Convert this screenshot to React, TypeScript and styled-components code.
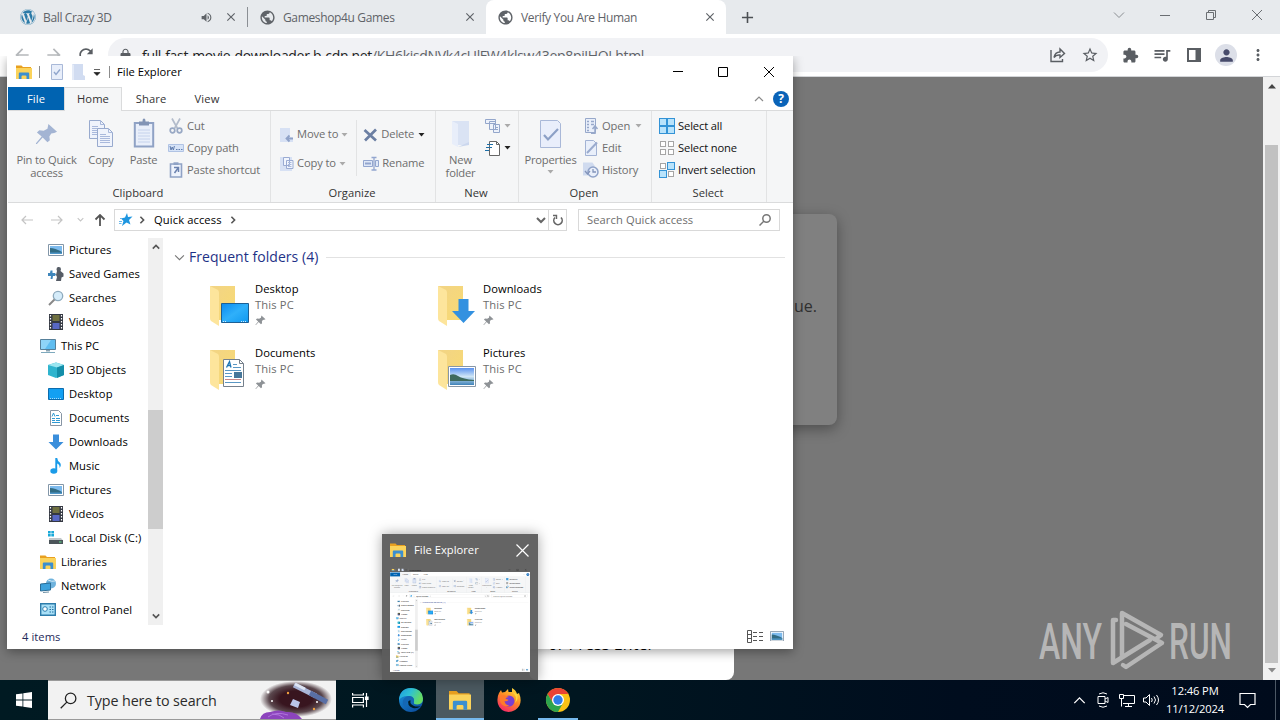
import React from 'react';
import styled, { createGlobalStyle, css } from 'styled-components';
import {
  MdAdd,
  MdArrowBack,
  MdArrowForward,
  MdClose,
  MdExtension,
  MdLock,
  MdMoreVert,
  MdPerson,
  MdPublic,
  MdQueueMusic,
  MdRefresh,
  MdStarBorder,
  MdVolumeUp,
} from 'react-icons/md';
import { FaWordpress } from 'react-icons/fa';

const GlobalStyle = createGlobalStyle`
  * {
    box-sizing: border-box;
  }
  body {
    margin: 0;
    font-family: 'Open Sans', 'Noto Sans', sans-serif;
    font-size: 11.2px;
    color: #000;
    overflow: hidden;
  }
  svg {
    display: block;
    flex: none;
  }
`;

const Screen = styled.div`
  position: relative;
  width: 1280px;
  height: 720px;
  display: flex;
  flex-direction: column;
  overflow: hidden;
  background: #777;
`;

/* ---------- browser ---------- */

const Browser = styled.div`
  height: 680px;
  display: flex;
  flex-direction: column;
`;

const TabStrip = styled.div`
  height: 34px;
  flex: none;
  display: flex;
  background: #e7eaed;
`;

const BrowserTab = styled.div<{ $active?: boolean; $width: number; $left?: number }>`
  width: ${(p) => p.$width}px;
  height: 34px;
  padding: 0 9px 0 ${(p) => p.$left ?? 11}px;
  display: flex;
  align-items: center;
  font-size: 12px;
  letter-spacing: -0.35px;
  color: #5f6368;
  background: ${(p) => (p.$active ? '#fff' : 'transparent')};
  border-radius: 8px 8px 0 0;
  span {
    flex: 1;
    margin-left: 7px;
    white-space: nowrap;
  }
  svg + svg {
    margin-left: 11px;
  }
`;

const TabDivider = styled.i`
  width: 1px;
  height: 20px;
  margin-top: 7px;
  background: #8b8f94;
`;

const NewTab = styled.div`
  display: flex;
  align-items: center;
  margin-left: 12px;
  color: #4c5054;
`;

const Caption = styled.div`
  margin-left: auto;
  height: 29px;
  display: flex;
  align-items: center;
  svg {
    width: 46px;
  }
`;

const Toolbar = styled.div`
  height: 43px;
  flex: none;
  display: flex;
  align-items: center;
  background: #fff;
  border-bottom: 1px solid #d3d5d8;
  color: #5a5e63;
`;

const NavButtons = styled.div`
  width: 108px;
  padding-left: 12px;
  display: flex;
  gap: 12px;
`;

const Omnibox = styled.div`
  width: 1000px;
  height: 34px;
  padding: 0 9px 0 10px;
  display: flex;
  align-items: center;
  border-radius: 17px;
  background: #f1f2f5;
  span {
    flex: 1;
    margin-left: 9px;
    font-size: 14px;
    letter-spacing: -0.33px;
    white-space: nowrap;
    color: #222;
  }
  em {
    font-style: normal;
    color: #5f6368;
  }
  svg + svg {
    margin-left: 14px;
  }
`;

const ToolbarIcons = styled.div`
  flex: 1;
  display: flex;
  align-items: center;
  padding-left: 11px;
`;

const IconCell = styled.div`
  width: 32px;
  margin-left: -5px;
  margin-right: 5px;
  display: flex;
  justify-content: center;
`;

const Profile = styled.div`
  width: 22px;
  height: 22px;
  border-radius: 50%;
  display: flex;
  align-items: center;
  justify-content: center;
  background: #dcdfe8;
  color: #474b6b;
`;

const Viewport = styled.div`
  flex: 1;
  display: flex;
  min-height: 0;
`;

const WebPage = styled.div`
  position: relative;
  flex: 1;
  padding: 137px 0 0 426px;
  background: #777;
`;

const ConsentCard = styled.div`
  width: 411px;
  height: 211px;
  padding: 81px 20px 0;
  text-align: right;
  font-size: 16px;
  color: #303030;
  background: #808080;
  border-radius: 8px;
  box-shadow: 0 4px 14px rgba(0, 0, 0, 0.35);
`;

const VerifyPanel = styled.div`
  position: absolute;
  left: 529px;
  bottom: 0;
  width: 205px;
  height: 60px;
  padding: 12px 0 0 19px;
  border-radius: 0 0 8px 8px;
  background: #fff;
  font-size: 16px;
  letter-spacing: 0.1px;
  line-height: 24px;
`;

const PageScrollbar = styled.div`
  width: 17px;
  padding: 7px 2px 7px;
  display: flex;
  flex-direction: column;
  align-items: center;
  background: #f1f1f1;
  i {
    width: 13px;
    height: 518px;
    margin: 56px 0 auto;
    background: #c1c1c1;
  }
`;

const Watermark = styled.svg`
  position: absolute;
  left: 1036px;
  top: 530px;
  overflow: visible;
  font-family: Roboto, sans-serif;
`;

/* ---------- explorer ---------- */

const WindowFrame = styled.div<{ $ghost?: boolean }>`
  width: 786px;
  height: 593px;
  padding-left: 1px;
  display: flex;
  flex-direction: column;
  background: ${(p) =>
    p.$ghost ? 'linear-gradient(transparent 27px, #fff 27px)' : '#fff'};
  white-space: nowrap;
`;

const ExplorerPosition = styled.div`
  position: absolute;
  left: 7px;
  top: 56px;
  box-shadow: 0 3px 10px rgba(0, 0, 0, 0.35);
  clip-path: inset(0 -14px -14px -14px);
`;

const TitleBar = styled.div`
  height: 31px;
  flex: none;
  display: flex;
  align-items: center;
  padding: 0 1px 0 8px;
`;

const TitleDivider = styled.i<{ $left: number; $right: number }>`
  width: 1px;
  height: 12px;
  margin: 0 ${(p) => p.$right}px 0 ${(p) => p.$left}px;
  background: #8c8c8c;
`;

const QuickTools = styled.div`
  display: flex;
  align-items: center;
  gap: 8px;
`;

const Title = styled.span`
  letter-spacing: 0.02px;
  margin-bottom: 1px;
`;

const WindowButtons = styled.div`
  margin-left: auto;
  display: flex;
  svg {
    width: 46px;
  }
`;

const RibbonTabs = styled.div`
  height: 24px;
  flex: none;
  display: flex;
  border-bottom: 1px solid #dadbdc;
`;

const RibbonTab = styled.div<{ $kind?: 'file' | 'active' }>`
  width: 56px;
  height: 24px;
  line-height: 24px;
  text-align: center;
  letter-spacing: 0.1px;
  color: #333;
  ${(p) =>
    p.$kind === 'file' &&
    css`
      height: 23px;
      background: #0063b1;
      color: #fff;
    `}
  ${(p) =>
    p.$kind === 'active' &&
    css`
      width: 58px;
      margin-right: 1px;
      background: #f5f6f7;
      border: 1px solid #dadbdc;
      border-bottom: 0;
      line-height: 22px;
    `}
`;

const RibbonHelp = styled.div`
  margin-left: auto;
  padding-right: 4px;
  display: flex;
  align-items: center;
  gap: 9px;
`;

const HelpBadge = styled.div`
  width: 16px;
  height: 16px;
  border-radius: 50%;
  background: #0a63b8;
  color: #fff;
  font-weight: 700;
  font-size: 12px;
  line-height: 16px;
  text-align: center;
`;

const Ribbon = styled.div`
  height: 92px;
  flex: none;
  display: flex;
  background: #f5f6f7;
  border-bottom: 1px solid #dadbdc;
`;

const Group = styled.div<{ $width: number }>`
  width: ${(p) => p.$width}px;
  display: flex;
  flex-direction: column;
  border-right: 1px solid #e2e3e4;
`;

const GroupBody = styled.div<{ $left: number }>`
  height: 73px;
  padding-left: ${(p) => p.$left}px;
  display: flex;
`;

const GroupLabel = styled.div`
  height: 18px;
  padding-right: 2px;
  line-height: 17px;
  text-align: center;
  letter-spacing: 0.02px;
  color: #333;
`;

const BigButton = styled.div<{ $width: number }>`
  width: ${(p) => p.$width}px;
  padding-top: 7px;
  display: flex;
  flex-direction: column;
  align-items: center;
  flex: none;
  color: #6d6d6d;
  line-height: 13px;
  letter-spacing: -0.2px;
  text-align: center;
  svg:first-child {
    margin-bottom: 3px;
  }
  svg + span + svg {
    margin-top: 4px;
  }
`;

const Commands = styled.div<{ $left?: number; $top?: number }>`
  padding: ${(p) => p.$top ?? 4}px 0 0 ${(p) => p.$left ?? 0}px;
`;

const Command = styled.div<{ $row?: number; $enabled?: boolean }>`
  height: ${(p) => p.$row ?? 22}px;
  padding-bottom: 2px;
  display: flex;
  align-items: center;
  gap: 3px;
  letter-spacing: -0.14px;
  color: ${(p) => (p.$enabled ? '#111' : '#6d6d6d')};
  svg {
    margin-top: 2px;
  }
`;

const CommandDivider = styled.i`
  width: 1px;
  height: 56px;
  margin: 9px 6px 0 8px;
  background: #e2e3e4;
`;

const AddressRow = styled.div`
  height: 35px;
  flex: none;
  display: flex;
  align-items: center;
  padding: 0 0 2px 12px;
`;

const NavArrows = styled.div`
  width: 88px;
  display: flex;
  align-items: center;
  padding-left: 1px;
  svg:nth-child(2) {
    margin-left: 18px;
  }
  svg:nth-child(3) {
    margin: 0 10px 0 14px;
  }
`;

const AddressBar = styled.div`
  width: 453px;
  height: 22px;
  margin-left: 6px;
  display: flex;
  align-items: center;
  border: 1px solid #d9d9d9;
  padding-left: 4px;
  svg + svg {
    margin-left: 5px;
  }
  span {
    margin: 0 7px 1px 8px;
    letter-spacing: 0.1px;
  }
`;

const AddressEnd = styled.div`
  margin-left: auto;
  height: 20px;
  display: flex;
  align-items: center;
  svg:first-child {
    margin-right: 2px;
  }
`;

const RefreshCell = styled.div`
  width: 18px;
  height: 20px;
  padding-left: 2px;
  display: flex;
  align-items: center;
  justify-content: center;
  border-left: 1px solid #d9d9d9;
`;

const SearchField = styled.div`
  width: 202px;
  height: 22px;
  margin-left: 11px;
  padding: 0 8px 1px 8px;
  display: flex;
  align-items: center;
  justify-content: space-between;
  border: 1px solid #d9d9d9;
  color: #6d6d6d;
  letter-spacing: 0.08px;
  svg {
    margin-top: 1px;
  }
`;

const Body = styled.div`
  flex: 1;
  display: flex;
  min-height: 0;
`;

const Tree = styled.div`
  width: 140px;
`;

const TreeItem = styled.div<{ $root?: boolean }>`
  height: 24px;
  padding: 0 0 2px ${(p) => (p.$root ? 32 : 40)}px;
  display: flex;
  align-items: center;
  gap: 5px;
  letter-spacing: 0.05px;
`;

const TreeIcon = styled.div`
  width: 16px;
  padding-top: 2px;
  display: flex;
  justify-content: center;
`;

const TreeScrollbar = styled.div`
  width: 15px;
  padding: 5px 0 5px;
  display: flex;
  flex-direction: column;
  align-items: center;
  background: #f0f0f0;
  i {
    width: 15px;
    height: 119px;
    margin: 159px 0 auto;
    background: #cdcdcd;
  }
`;

const Files = styled.div`
  flex: 1;
  padding: 9px 8px 0 11px;
`;

const SectionHeader = styled.div`
  height: 20px;
  display: flex;
  align-items: center;
  gap: 4px;
  font-size: 14px;
  letter-spacing: 0.05px;
  color: #1e3287;
  span {
    margin-bottom: 2px;
  }
  i {
    flex: 1;
    height: 1px;
    margin-left: 4px;
    background: #e2e2e2;
  }
`;

const Tiles = styled.div`
  padding: 13px 0 0 36px;
  display: grid;
  grid-template-columns: 228px 228px;
  grid-auto-rows: 64px;
`;

const Tile = styled.div`
  display: flex;
  gap: 5px;
  line-height: 16px;
  > svg {
    margin-top: 4px;
  }
  > div {
    padding-top: 1px;
  }
  div > svg {
    margin-top: 2px;
  }
  p {
    margin: 0;
    letter-spacing: 0.05px;
  }
  p + p {
    color: #6d6d6d;
    letter-spacing: 0.15px;
  }
`;

const StatusBar = styled.div`
  height: 24px;
  flex: none;
  padding: 0 9px 0 14px;
  display: flex;
  align-items: center;
  color: #1e2a5a;
  span {
    flex: 1;
    margin-bottom: 2px;
    letter-spacing: 0.05px;
  }
  svg {
    margin-bottom: 2px;
  }
  svg + svg {
    margin-left: 6px;
  }
`;

/* ---------- task bar ---------- */

const Preview = styled.div`
  position: absolute;
  left: 382px;
  top: 534px;
  width: 156px;
  height: 146px;
  background: rgba(92, 92, 92, 0.95);
  box-shadow: 0 0 12px rgba(0, 0, 0, 0.35);
`;

const PreviewHeader = styled.div`
  height: 33px;
  padding: 0 9px 0 8px;
  display: flex;
  align-items: center;
  color: #fff;
  svg:first-child {
    margin-bottom: 1px;
  }
  span {
    flex: 1;
    margin: 0 0 2px 8px;
    letter-spacing: 0.02px;
  }
`;

const Thumbnail = styled.div`
  width: 140px;
  height: 105px;
  margin-left: 8px;
  overflow: hidden;
  > div {
    transform: scale(0.1781, 0.177);
    transform-origin: 0 0;
  }
`;

const TaskBar = styled.div`
  height: 40px;
  display: flex;
  background: linear-gradient(90deg, #001a22, #001620 45%, #000d1e 75%, #000b1c);
  color: #fff;
`;

const TaskButton = styled.div<{ $width?: number }>`
  width: ${(p) => p.$width ?? 48}px;
  display: flex;
  align-items: center;
  justify-content: center;
`;

const TaskSearch = styled.div`
  width: 288px;
  padding-left: 12px;
  display: flex;
  align-items: center;
  background: #f2f2f2;
  border: 1px solid #9a9a9a;
  border-width: 1px 0;
  color: #2b2b2b;
  font-size: 14.3px;
  letter-spacing: -0.1px;
  span {
    flex: 1;
    margin-left: 10px;
  }
`;

const AppButton = styled.div<{ $state?: 'active' | 'open' }>`
  width: 48px;
  height: 40px;
  margin-right: 1px;
  display: flex;
  align-items: center;
  justify-content: center;
  ${(p) =>
    p.$state === 'active' &&
    css`
      background: #4b5960;
      box-shadow: inset 0 -2px #76b9ed;
    `}
  ${(p) =>
    p.$state === 'open' &&
    css`
      background: linear-gradient(#76b9ed, #76b9ed) 4px 38px / 40px 2px no-repeat;
    `}
`;

const Tray = styled.div`
  margin-left: auto;
  display: flex;
  align-items: center;
`;

const TrayIcon = styled.div`
  width: 24px;
  display: flex;
  justify-content: center;
`;

const Clock = styled.div`
  width: 64px;
  font-size: 11.2px;
  line-height: 18px;
  letter-spacing: -0.12px;
  text-align: center;
  white-space: nowrap;
`;

const ShowDesktop = styled.i`
  width: 5px;
  height: 40px;
  margin-left: 8px;
  border-left: 1px solid #4c5865;
`;

/* ---------- icons ---------- */

type ChevronProps = { dir: 'up' | 'down' | 'right'; size?: number; color?: string; weight?: number };

const chevrons = { up: 'M1 7l4-4 4 4', down: 'M1 3l4 4 4-4', right: 'M3 1l4 4-4 4' };

const Chevron = ({ dir, size = 10, color = '#555', weight = 1.5 }: ChevronProps) => (
  <svg width={size} height={size} viewBox="0 0 10 10" fill="none" stroke={color} strokeWidth={weight}>
    <path d={chevrons[dir]} />
  </svg>
);

const Caret = ({ color = '#aaa', gap = 0 }: { color?: string; gap?: number }) => (
  <svg width={7 + gap} height="4" viewBox={`${-gap} 0 ${7 + gap} 4`}>
    <path d="M0.5 0h6L3.5 3.5z" fill={color} />
  </svg>
);

const FolderIcon = ({ size = 16 }: { size?: number }) => (
  <svg width={size} height={size} viewBox="0 0 16 16">
    <path d="M0 1.5h5.5l1.5 1.5H15v3H0z" fill="#e8a020" />
    <path d="M0 4h16v11H0z" fill="#fbd35b" />
    <path d="M2.8 15V9.5q0-1 1-1h8.4q1 0 1 1V15h-2.7v-2.4q0-1-1-1h-3q-1 0-1 1V15z" fill="#3c8fd0" />
  </svg>
);

const DocCheckIcon = () => (
  <svg width="12" height="16" viewBox="0 0 12 16" fill="#e8eefa" stroke="#a9b9d8">
    <path d="M.5.5h11v15H.5z" />
    <path d="M3 8l2 2.5L9 5.5" fill="none" stroke="#8fa5cc" strokeWidth="1.4" />
  </svg>
);

const PlainFolder = () => (
  <svg width="14" height="16" viewBox="0 0 14 16">
    <path d="M1 0h11v11l2 1v4H1z" fill="#d1dcf1" />
    <path d="M1 0l2 1v15H1z" fill="#e4ebf8" />
  </svg>
);

const PinIcon = ({ size = 24, color = '#a3b4d3' }: { size?: number; color?: string }) => (
  <svg width={size} height={size} viewBox="0 0 24 24" fill={color}>
    <path d="M14 1l9 8-3 1.500-3 .5-2 3 .5 4-2.500 2-5-5-6 7H1v-1l6-7-5-4 2.500-2.500 4.500.5L13 6z" />
  </svg>
);

const Sheet = ({ x = 0, y = 0 }: { x?: number; y?: number }) => (
  <g transform={`translate(${x} ${y})`}>
    <path d="M.5.5h11l4 4v14H.5z" fill="#eff3fc" stroke="#98aace" />
    <path d="M11.5.5v4h4M3 6.500h6M3 8.500h10M3 10.500h10M3 12.500h10M3 14.500h10" fill="none" stroke="#a9b9dc" />
  </g>
);

const CopyIcon = () => (
  <svg width="26" height="32" viewBox="0 0 26 32">
    <Sheet x={1} y={2} />
    <Sheet x={9} y={10} />
  </svg>
);

const PasteIcon = () => (
  <svg width="22" height="32" viewBox="0 0 22 32">
    <path d="M1.800 5h18.400v23.500H1.800z" fill="#e9effa" stroke="#8fa2c5" strokeWidth="2" />
    <path d="M6 3.500h3.500q0-3 1.500-3t1.500 3H16v4H6z" fill="#8294b5" />
    <path d="M5 12h12M5 15h12M5 18h12M5 21h12M5 24h12" stroke="#c5d2ec" />
  </svg>
);

const CutIcon = () => (
  <svg width="16" height="16" viewBox="0 0 16 16" fill="none" stroke="#98a8c4" strokeWidth="1.700">
    <path d="M4 .5l5.500 10M12 .5l-5.500 10" stroke="#b3bccb" />
    <circle cx="4.500" cy="12.500" r="2.300" />
    <circle cx="11.500" cy="12.500" r="2.300" />
  </svg>
);

const CopyPathIcon = () => (
  <svg width="16" height="16" viewBox="0 0 16 16">
    <path d="M.5 4.500h15v7H.5z" fill="#d6e3f7" stroke="#b0c3e4" />
    <path d="M2 6l1 4 1.200-3 1.200 3 1-4M8 9.500h1.500M10.500 9.500H12M13 9.500h1.500" fill="none" stroke="#5f7cad" />
  </svg>
);

const PasteShortcutIcon = () => (
  <svg width="16" height="16" viewBox="0 0 16 16">
    <path d="M2.500 2h11v13h-11z" fill="#eef3fc" stroke="#8fa2c5" strokeWidth="1.600" />
    <path d="M5.500.3h5v2.700h-5z" fill="#8fa2c5" />
    <path d="M6 5.500h4.500V10M10.500 5.500L6.500 11" fill="none" stroke="#6b82af" strokeWidth="1.500" />
  </svg>
);

const MoveToIcon = () => (
  <svg width="14" height="16" viewBox="0 0 14 16">
    <path d="M0 1h10v9l3 1v4H0z" fill="#d7e1f4" />
    <path d="M13 11.500H7M9.500 8.500l-3 3 3 3" stroke="#8fa2c8" strokeWidth="1.800" fill="none" />
  </svg>
);

const CopyToIcon = () => (
  <svg width="14" height="16" viewBox="0 0 14 16">
    <path d="M0 1h12v14H0z" fill="#d7e1f4" />
    <path d="M3.500 1.500h6v8h-6zM6.500 4.500h6.500v8H6.500z" fill="#f1f5fd" stroke="#9aabd2" />
    <path d="M8 6.500h3.500M8 8.500h3.500M8 10.500h3.500" stroke="#a9b9dc" />
  </svg>
);

const DeleteIcon = () => (
  <svg width="15" height="14" viewBox="0 0 15 14">
    <path d="M1.500 2l11.500 10.500M13 1.500L2 12.500" stroke="#6b7fa3" strokeWidth="2.700" />
  </svg>
);

const RenameIcon = () => (
  <svg width="16" height="16" viewBox="0 0 16 16" fill="none" stroke="#93a6cf">
    <path d="M.5 4.500h9v6h-9zM12.500 4.500h3v6h-3z" fill="#dfe8f8" />
    <path d="M2 7.500h6" strokeWidth="2" />
    <path d="M8.500 1.500h2.500v12.500H8.500M13.500 1.500H11M13.500 14H11" strokeWidth="1.300" />
  </svg>
);

const NewFolderIcon = () => (
  <svg width="22" height="32" viewBox="0 0 22 32">
    <path d="M2 3h17v24H6z" fill="#dae3f4" />
    <path d="M2 3l6 3v23l-6-3z" fill="#e8eefa" />
    <path d="M8 29l11-5v3z" fill="#cbd7ee" />
  </svg>
);

const NewItemIcon = () => (
  <svg width="16" height="16" viewBox="0 0 16 16" fill="#edf2fb" stroke="#93a6cb">
    <path d="M.5 1.500h10v4H.5zM4.500 3.500h6v8h-6zM8.500 6.500h6v8h-6z" />
    <path d="M10 9.500h3M10 11.500h3" />
  </svg>
);

const EasyAccessIcon = () => (
  <svg width="16" height="16" viewBox="0 0 16 16" fill="none">
    <path d="M4.500 1.500h7l3 3v11H4.500z" fill="#fff" stroke="#666" />
    <path d="M11.500 1.500v3h3" stroke="#666" />
    <path d="M2 4.500h6M1 7.500h6M0 10.500h4" stroke="#1d6fa8" strokeWidth="1.200" />
  </svg>
);

const PropertiesIcon = () => (
  <svg width="22" height="32" viewBox="0 0 22 32">
    <path d="M.5 2.500h17l3 3v24H.5z" fill="#e9eefb" stroke="#a9b8d8" />
    <path d="M4 17l4 4.500L18 11" fill="none" stroke="#8ca0c6" strokeWidth="2.200" />
  </svg>
);

const OpenIcon = () => (
  <svg width="16" height="16" viewBox="0 0 16 16" fill="none" stroke="#97a8ca">
    <path d="M2.500.5h10v14h-10z" fill="#e9effa" />
    <path d="M4 3.500h2M8 3.500h3M4 6.500h2M8 6.500h3M4 9.500h2M4 12.500h2" strokeWidth="1.500" />
    <path d="M8 15.500h4V9M9.500 11L12 8l2.500 3" strokeWidth="1.500" />
  </svg>
);

const EditIcon = () => (
  <svg width="16" height="16" viewBox="0 0 16 16">
    <path d="M2.500.5h8l3 3v12h-11z" fill="#e9effa" stroke="#a3b3d4" />
    <path d="M4 13L14 2.500" stroke="#9aabce" strokeWidth="2" />
  </svg>
);

const HistoryIcon = () => (
  <svg width="16" height="16" viewBox="0 0 16 16">
    <path d="M0 .5h9.500l2 3v10H0z" fill="#d0dbef" />
    <circle cx="10" cy="10" r="5" fill="#e9effa" stroke="#8fa2c8" strokeWidth="1.500" />
    <path d="M10 7v3h3M2 9l2.500 3L7 9" fill="none" stroke="#8294ba" strokeWidth="1.300" />
  </svg>
);

const selectPatterns = { all: [1, 1, 1, 1], none: [0, 0, 0, 0], invert: [0, 1, 1, 0] };

const SelectIcon = ({ kind }: { kind: keyof typeof selectPatterns }) => (
  <svg width="16" height="16" viewBox="0 0 16 16">
    {selectPatterns[kind].map((on, i) => {
      const x = (i % 2) * 8;
      const y = i > 1 ? 8 : 0;
      return on ? (
        <rect key={i} x={x + 0.5} y={y + 0.5} width="7" height="7" fill="#b9e3fb" stroke="#3393d6" />
      ) : (
        <rect key={i} x={x + 1.5} y={y + 1.5} width="5" height="5" fill="#fff" stroke="#a5a5a5" />
      );
    })}
  </svg>
);

const Arrow = ({ back, dark }: { back?: boolean; dark?: boolean }) => (
  <svg width="12" height="12" viewBox="0 0 12 12" fill="none" stroke={dark ? '#555' : '#c4c4c4'} strokeWidth={dark ? 1.8 : 1.2}>
    {dark ? <path d="M6 12V1M1.500 5.500L6 1l4.500 4.500" /> : <path d={back ? 'M12 6H1M5 2L1 6l4 4' : 'M0 6h11M7 2l4 4-4 4'} />}
  </svg>
);

const StarIcon = () => (
  <svg width="14" height="14" viewBox="0 0 14 14">
    <path d="M8 0l1 4 4.500-.5-3.500 3.500 1.500 4.500L7.500 9.500 3 13l1.500-5L2 5.500 6 4.500z" fill="#1e96e0" />
    <path d="M0 8.500h3M0 10.500h2.500M1 5.500h2" stroke="#6bb9ec" />
  </svg>
);

const SearchIcon = ({ size = 12, color = '#777', width = 1.5 }: { size?: number; color?: string; width?: number }) => (
  <svg width={size} height={size} viewBox="0 0 12 12" fill="none" stroke={color} strokeWidth={width}>
    <circle cx="7.500" cy="4.500" r="3.700" />
    <path d="M5 7L.5 11.500" />
  </svg>
);

const RefreshIcon = () => (
  <svg width="12" height="12" viewBox="0 0 12 12" fill="none" stroke="#666" strokeWidth="1.600">
    <path d="M9 3.500A4.200 4.200 0 1 1 3 3.500" />
    <path d="M1 1.500h3.500V5" strokeWidth="1.400" />
  </svg>
);

const PictureIcon = ({ width = 16 }: { width?: number }) => (
  <svg width={width} height={width * 0.75} viewBox="0 0 16 12">
    <path d="M.5.5h15v11H.5z" fill="#fff" stroke="#8396a8" />
    <path d="M2 2h12v8H2z" fill="#7dbbee" />
    <path d="M2 4q5 0 12 4v2H2z" fill="#316b83" />
    <path d="M2 8.500h12V10H2z" fill="#4e96c8" />
  </svg>
);

const GamesIcon = () => (
  <svg width="16" height="16" viewBox="0 0 16 16">
    <path d="M10 1q3-.5 3 2.300L12.500 5l3 2.500v3l-2 1L13 15H8l1-4-1-2 1-4-.5-1.500Q8.500 1 10 1z" fill="#555c66" />
    <path d="M0 7h2l.5-2.500h2V7h2.500l1 1.500-1 1.500H5l-.5 3h-2l.5-3H0z" fill="#3f86bb" />
  </svg>
);

const LensIcon = () => (
  <svg width="16" height="16" viewBox="0 0 16 16">
    <circle cx="10" cy="6" r="4.700" fill="#d5ecfa" stroke="#8eaabd" strokeWidth="1.300" />
    <path d="M6.500 9.500L1 15" stroke="#888" strokeWidth="2" />
  </svg>
);

const FilmIcon = () => (
  <svg width="14" height="16" viewBox="0 0 14 16">
    <path d="M0 0h14v16H0z" fill="#343842" />
    <path d="M1.500 1v14M12.500 1v14" stroke="#fff" strokeWidth="1.200" strokeDasharray="1.500 1.500" />
    <path d="M3.500 1h7v6h-7z" fill="#6f7040" />
    <path d="M3.500 9h7v6h-7z" fill="#5868c4" />
  </svg>
);

const PcIcon = () => (
  <svg width="16" height="16" viewBox="0 0 16 16">
    <path d="M.5 1.500h15v10H.5z" fill="#5fbdf0" stroke="#56809a" />
    <path d="M1 2h10L5 11H1z" fill="#8ed4f8" />
    <path d="M6 12h4v1.500H6z" fill="#8ba5b3" />
    <path d="M1 14.500h14" stroke="#7ea9bd" />
  </svg>
);

const CubeIcon = () => (
  <svg width="16" height="16" viewBox="0 0 16 16">
    <path d="M0 3l8-2.500L16 3v10l-8 3-8-3z" fill="#2fb4ce" />
    <path d="M0 3l8-2.500L16 3 9 5.500z" fill="#9be6f0" />
    <path d="M9 5.500L16 3v10l-7 3z" fill="#148ea9" />
  </svg>
);

const DesktopIcon = () => (
  <svg width="16" height="12" viewBox="0 0 16 12">
    <path d="M.5.5h15v11H.5z" fill="#13a0f2" stroke="#0c6cad" />
    <path d="M2 10.500h12" stroke="#a9dcfb" strokeDasharray="1 1" />
  </svg>
);

const DocumentIcon = () => (
  <svg width="12" height="16" viewBox="0 0 12 16">
    <path d="M.5.5h8l3 3v12H.5z" fill="#fff" stroke="#8795a4" />
    <path d="M2 6.500l1.500-3.500L5 6.500M6 5.500h3M2 8.500h3M6 8.500h4M2 10.500h3M6 10.500h4M2 12.500h8" fill="none" stroke="#2f9ad4" />
  </svg>
);

const DownIcon = () => (
  <svg width="16" height="16" viewBox="0 0 16 16">
    <path d="M5 .5h6V8h4.500L8 15.500.5 8H5z" fill="#3a8edb" />
  </svg>
);

const MusicIcon = () => (
  <svg width="16" height="16" viewBox="0 0 16 16" fill="#1a9be8">
    <path d="M7.300 0h1.900q.3 3 2.600 4.500Q14 7 11.500 10q.6-3.500-2.300-4.500v7H7.300z" />
    <ellipse cx="5.800" cy="13" rx="3.500" ry="2.700" />
  </svg>
);

const DiskIcon = () => (
  <svg width="16" height="16" viewBox="0 0 16 16">
    <path d="M0 1h2.700v2.500H0zM3.300 1H6v2.500H3.300zM0 4h2.700v2.500H0zM3.300 4H6v2.500H3.300z" fill="#19a9d8" />
    <path d="M1 8h12l2 2.500H1z" fill="#c3c8cb" />
    <path d="M1 10h14v4H1z" fill="#4c555a" />
    <path d="M11 12h2.500" stroke="#5fe08a" />
  </svg>
);

const NetworkIcon = () => (
  <svg width="16" height="16" viewBox="0 0 16 16">
    <circle cx="11" cy="5.500" r="5" fill="#6fb3dd" />
    <path d="M8 2q4 2 7 1" stroke="#d4ecf8" fill="none" />
    <path d="M.5 6l10-1v7l-10 1z" fill="#3ea2dc" stroke="#2b6d96" />
    <path d="M3 14.500l6-.5" stroke="#6e8fa4" />
  </svg>
);

const ControlIcon = () => (
  <svg width="16" height="14" viewBox="0 0 16 14">
    <path d="M.7.7h14.600v11.600H.7z" fill="#a9e0f7" stroke="#2d7cab" strokeWidth="1.400" />
    <circle cx="5" cy="6" r="2.300" fill="#fff" stroke="#2b7fb0" />
    <path d="M9.500 4h4M9.500 6.500h4M9.500 9h4" stroke="#256f9e" strokeDasharray="1.500 1" />
  </svg>
);

const BigFolder = ({ kind }: { kind: string }) => (
  <svg width="40" height="44" viewBox="0 0 40 44">
    <defs>
      <linearGradient id="folderBack" x1="0" y1="0" x2="1" y2="1">
        <stop offset="0" stopColor="#f2d486" />
        <stop offset="1" stopColor="#f8da72" />
      </linearGradient>
      <linearGradient id="screenBlue" x1="0" y1="0" x2="1" y2="1">
        <stop offset="0" stopColor="#0a8af0" />
        <stop offset="0.500" stopColor="#2fb0fa" />
        <stop offset="1" stopColor="#0f98f0" />
      </linearGradient>
      <linearGradient id="photo" x1="0" y1="0" x2="0" y2="1">
        <stop offset="0" stopColor="#5a92ef" />
        <stop offset="0.500" stopColor="#cfe6f6" />
        <stop offset="1" stopColor="#3f82b8" />
      </linearGradient>
    </defs>
    <path d="M0 2h25v34H4z" fill="url(#folderBack)" />
    <path d="M0 2l8 4q1 1 1 3v33l-8-5q-1-1-1-3z" fill="#fde59c" />
    {kind === 'Desktop' && (
      <>
        <path d="M11.500 19.500h27v19h-27z" fill="url(#screenBlue)" stroke="#1c5f94" />
        <path d="M13 37.500h4M31 37.500h6" stroke="#cdeafd" strokeDasharray="1 1" />
      </>
    )}
    {kind === 'Downloads' && <path d="M20.500 15h10v12H37L25.500 39 14 27h6.500z" fill="#3391e0" />}
    {kind === 'Documents' && (
      <g fill="none">
        <path d="M13.500 11.500h16l4 4v23h-20z" fill="#fff" stroke="#75808c" />
        <path d="M29.500 11.500v4h4" stroke="#75808c" />
        <path d="M16.500 19.500l3-6 1.500 6M17.500 17.500h3" stroke="#1d74b4" strokeWidth="1.300" />
        <path d="M23 16.500h4M23 19.500h8M15 22.500h16M15 25.500h7M15 28.500h7M15 34.500h16" stroke="#5a97c4" />
        <path d="M15 31.500h16" stroke="#c98787" />
        <path d="M24 24h8v6h-8z" fill="#47779a" />
      </g>
    )}
    {kind === 'Pictures' && (
      <>
        <path d="M10.500 18.500h27v20h-27z" fill="#fff" stroke="#8796a6" />
        <path d="M12 20h24v17H12z" fill="url(#photo)" />
        <path d="M12 27q4-2 8 1 5 3 16 4v1H12z" fill="#3e6a5c" />
      </>
    )}
  </svg>
);

const ChromeShare = () => (
  <svg width="18" height="18" viewBox="0 0 18 18" fill="none" stroke="#5a5e63" strokeWidth="1.400">
    <path d="M2 4v11.500h11.500V13" />
    <path d="M5 11.500q1-5.500 6-5.500V3l4.500 4.500-4.500 4V9q-4-.5-6 2.500z" />
  </svg>
);

const EdgeIcon = () => (
  <svg width="26" height="26" viewBox="0 0 26 26">
    <defs>
      <linearGradient id="edgeTop" x1="0" y1="0" x2="1" y2="0.400">
        <stop offset="0" stopColor="#1e9de0" />
        <stop offset="0.500" stopColor="#2fc3d6" />
        <stop offset="1" stopColor="#66dc62" />
      </linearGradient>
      <linearGradient id="edgeBase" x1="0" y1="0" x2="0.700" y2="1">
        <stop offset="0" stopColor="#1c98e2" />
        <stop offset="1" stopColor="#0c4f9f" />
      </linearGradient>
    </defs>
    <circle cx="13" cy="13" r="12" fill="url(#edgeBase)" />
    <path d="M1 13Q2 1 13 1q11 0 12 10.500.2 5.500-5.500 6-4.500 0-3.500-2.500Q17 10 11 9 4 8.500 1 13z" fill="url(#edgeTop)" />
    <path d="M10.500 12.500Q8.500 19 15 21q4 1 8-2-4 1-7 0-5-2-3-6.500z" fill="#001a22" />
    <path d="M11 9q4.500 0 5 4-.2 1.500-.8 2-1.500-2-3.700-1.500Q6 16 9.500 22 2 17 6 11.500 8 9 11 9z" fill="#1467b4" />
  </svg>
);

const FirefoxIcon = () => (
  <svg width="26" height="26" viewBox="0 0 26 26">
    <defs>
      <linearGradient id="fox" x1="0.800" y1="0" x2="0.250" y2="1">
        <stop offset="0" stopColor="#ffe33f" />
        <stop offset="0.450" stopColor="#ff8b24" />
        <stop offset="1" stopColor="#f6256b" />
      </linearGradient>
    </defs>
    <path d="M3 6l2-3 1 2.500L9 5l3-3 .5 3L16 5V1q4 2 5 6l2-1q3 7 .5 12.500-4 6.500-11 6.500Q4 24 2 17 .5 11 3 6z" fill="url(#fox)" />
    <circle cx="13" cy="14" r="5.500" fill="#7a3fd0" />
    <path d="M4 9q4-2 9 1-3 0-3.500 2 2 0 3 1-2 2-4 1 .5 4 5 4.500Q6 21 4 14z" fill="#ff7b2b" />
    <path d="M16 5q6 4 3 11 4-4 2-9" fill="#ffd83a" />
  </svg>
);

const ChromeIcon = () => (
  <svg width="26" height="26" viewBox="0 0 26 26">
    <circle cx="13" cy="13" r="12" fill="#fbc116" />
    <path d="M2.600 7A12 12 0 0 1 23.400 7H13v6L8 16z" fill="#ea4335" />
    <path d="M8 16L2.600 7A12 12 0 0 0 13 25l5-9z" fill="#2da44e" />
    <circle cx="13" cy="13" r="6" fill="#fff" />
    <circle cx="13" cy="13" r="4.700" fill="#2f7de9" />
  </svg>
);

// telescope and asteroid shown at the end of the search box
const SearchArt = () => (
  <svg width="80" height="38" viewBox="0 0 80 38">
    <defs>
      <radialGradient id="space">
        <stop offset="0.450" stopColor="#38151f" />
        <stop offset="0.750" stopColor="#5a474d" />
        <stop offset="1" stopColor="#f2f2f2" />
      </radialGradient>
    </defs>
    <ellipse cx="40" cy="18" rx="36" ry="18" fill="url(#space)" />
    <path d="M38 4l22 11" stroke="#a9b6d8" strokeWidth="5" />
    <path d="M39 3l10 5" stroke="#dde5f4" strokeWidth="3" />
    <path d="M54 12l17 9" stroke="#596fa5" strokeWidth="5" />
    <path d="M37 18l7 3-2 6-8-3z" fill="#b9c4ea" />
    <path d="M4 38q2-7 10-7 9-3 16 0 10-1 16 7z" fill="#8c44bd" />
    <path d="M12 36q8-6 20-2M16 33q8 0 12 4" stroke="#b074dc" fill="none" />
    <g fill="#fff">
      <circle cx="12" cy="11" r="1.500" />
      <circle cx="16" cy="20" r="1" />
      <circle cx="61" cy="21" r="1" />
    </g>
    <g fill="#f0a040">
      <circle cx="32" cy="12" r="1.200" />
      <circle cx="58" cy="28" r="1.200" />
    </g>
  </svg>
);

/* ---------- sections ---------- */

const tree = [
  { name: 'Pictures', icon: <PictureIcon /> },
  { name: 'Saved Games', icon: <GamesIcon /> },
  { name: 'Searches', icon: <LensIcon /> },
  { name: 'Videos', icon: <FilmIcon /> },
  { name: 'This PC', icon: <PcIcon />, root: true },
  { name: '3D Objects', icon: <CubeIcon /> },
  { name: 'Desktop', icon: <DesktopIcon /> },
  { name: 'Documents', icon: <DocumentIcon /> },
  { name: 'Downloads', icon: <DownIcon /> },
  { name: 'Music', icon: <MusicIcon /> },
  { name: 'Pictures', icon: <PictureIcon /> },
  { name: 'Videos', icon: <FilmIcon /> },
  { name: 'Local Disk (C:)', icon: <DiskIcon /> },
  { name: 'Libraries', icon: <FolderIcon />, root: true },
  { name: 'Network', icon: <NetworkIcon />, root: true },
  { name: 'Control Panel', icon: <ControlIcon />, root: true },
];

const folders = ['Desktop', 'Downloads', 'Documents', 'Pictures'];

const RibbonBar = () => (
  <Ribbon>
    <Group $width={263}>
      <GroupBody $left={3}>
        <BigButton $width={71}>
          <svg width="24" height="32" viewBox="0 -5 24 32">
            <PinIcon size={23} />
          </svg>
          <span>
            Pin to Quick
            <br />
            access
          </span>
        </BigButton>
        <BigButton $width={38}>
          <CopyIcon />
          <span>Copy</span>
        </BigButton>
        <BigButton $width={47}>
          <PasteIcon />
          <span>Paste</span>
        </BigButton>
        <Commands $left={1}>
          <Command><CutIcon />Cut</Command>
          <Command><CopyPathIcon />Copy path</Command>
          <Command><PasteShortcutIcon />Paste shortcut</Command>
        </Commands>
      </GroupBody>
      <GroupLabel>Clipboard</GroupLabel>
    </Group>
    <Group $width={165}>
      <GroupBody $left={9}>
        <Commands $top={9}>
          <Command $row={29}><MoveToIcon />Move to<Caret /></Command>
          <Command $row={29}><CopyToIcon />Copy to<Caret /></Command>
        </Commands>
        <CommandDivider />
        <Commands $top={9}>
          <Command $row={29}><DeleteIcon />Delete<Caret color="#222" gap={1} /></Command>
          <Command $row={29}><RenameIcon />Rename</Command>
        </Commands>
      </GroupBody>
      <GroupLabel>Organize</GroupLabel>
    </Group>
    <Group $width={83}>
      <GroupBody $left={4}>
        <BigButton $width={41}>
          <NewFolderIcon />
          <span>
            New
            <br />
            folder
          </span>
        </BigButton>
        <Commands $left={4}>
          <Command><NewItemIcon /><Caret /></Command>
          <Command><EasyAccessIcon /><Caret color="#222" /></Command>
        </Commands>
      </GroupBody>
      <GroupLabel>New</GroupLabel>
    </Group>
    <Group $width={133}>
      <GroupBody $left={5}>
        <BigButton $width={53}>
          <PropertiesIcon />
          <span>Properties</span>
          <Caret />
        </BigButton>
        <Commands $left={6}>
          <Command><OpenIcon />Open<Caret gap={2} /></Command>
          <Command><EditIcon />Edit</Command>
          <Command><HistoryIcon />History</Command>
        </Commands>
      </GroupBody>
      <GroupLabel>Open</GroupLabel>
    </Group>
    <Group $width={115}>
      <GroupBody $left={7}>
        <Commands>
          <Command $enabled><SelectIcon kind="all" />Select all</Command>
          <Command $enabled><SelectIcon kind="none" />Select none</Command>
          <Command $enabled><SelectIcon kind="invert" />Invert selection</Command>
        </Commands>
      </GroupBody>
      <GroupLabel>Select</GroupLabel>
    </Group>
  </Ribbon>
);

const Explorer = ({ ghost }: { ghost?: boolean }) => (
  <WindowFrame $ghost={ghost}>
    <TitleBar>
      <FolderIcon />
      <TitleDivider $left={7} $right={11} />
      <QuickTools>
        <DocCheckIcon />
        <PlainFolder />
        <svg width="8" height="8" viewBox="0 0 8 8">
          <path d="M1 1.500h6M1 4.500h6L4 7.500z" fill="#222" stroke="#222" strokeWidth=".7" />
        </svg>
      </QuickTools>
      <TitleDivider $left={8} $right={7} />
      <Title>File Explorer</Title>
      <WindowButtons>
        <svg height="12" viewBox="0 0 46 12"><path d="M19 5.500h10" stroke="#000" /></svg>
        <svg height="12" viewBox="0 0 46 12"><path d="M18.500 1.500h9v9h-9z" fill="none" stroke="#000" /></svg>
        <svg height="12" viewBox="0 0 46 12"><path d="M18 1l10 10M28 1L18 11" stroke="#000" /></svg>
      </WindowButtons>
    </TitleBar>
    <RibbonTabs>
      <RibbonTab $kind="file">File</RibbonTab>
      <RibbonTab $kind="active">Home</RibbonTab>
      <RibbonTab>Share</RibbonTab>
      <RibbonTab>View</RibbonTab>
      <RibbonHelp>
        <Chevron dir="up" color="#8a8a8a" weight={1.2} />
        <HelpBadge>?</HelpBadge>
      </RibbonHelp>
    </RibbonTabs>
    <RibbonBar />
    <AddressRow>
      <NavArrows>
        <Arrow back />
        <Arrow />
        <Chevron dir="down" size={7} color="#c4c4c4" />
        <Arrow dark />
      </NavArrows>
      <AddressBar>
        <StarIcon />
        <Chevron dir="right" size={8} weight={2} />
        <span>Quick access</span>
        <Chevron dir="right" size={8} weight={2} />
        <AddressEnd>
          <Chevron dir="down" color="#666" weight={2} />
          <RefreshCell>
            <RefreshIcon />
          </RefreshCell>
        </AddressEnd>
      </AddressBar>
      <SearchField>
        Search Quick access
        <SearchIcon />
      </SearchField>
    </AddressRow>
    <Body>
      <Tree>
        {tree.map((item, i) => (
          <TreeItem key={i} $root={item.root}>
            <TreeIcon>{item.icon}</TreeIcon>
            {item.name}
          </TreeItem>
        ))}
      </Tree>
      <TreeScrollbar>
        <Chevron dir="up" size={8} weight={2} />
        <i />
        <Chevron dir="down" size={8} weight={2} />
      </TreeScrollbar>
      <Files>
        <SectionHeader>
          <Chevron dir="down" color="#777" weight={1} size={11} />
          <span>Frequent folders (4)</span>
          <i />
        </SectionHeader>
        <Tiles>
          {folders.map((name) => (
            <Tile key={name}>
              <BigFolder kind={name} />
              <div>
                <p>{name}</p>
                <p>This PC</p>
                <PinIcon size={11} color="#8e9296" />
              </div>
            </Tile>
          ))}
        </Tiles>
      </Files>
    </Body>
    <StatusBar>
      <span>4 items</span>
      <svg width="17" height="13" viewBox="0 0 17 13" fill="none" stroke="#555">
        <path d="M.5.5h4v12h-4zM.5 4.500h4M.5 8.500h4" />
        <path d="M6 2.500h10M6 6.500h10M6 10.500h10" strokeDasharray="4 2" />
      </svg>
      <PictureIcon width={14} />
    </StatusBar>
  </WindowFrame>
);

const App = () => {
  return (
    <Screen>
      <GlobalStyle />
      <Browser>
        <TabStrip>
          <BrowserTab $width={247} $left={20}>
            <FaWordpress size={16} color="#2b7ba8" />
            <span>Ball Crazy 3D</span>
            <MdVolumeUp size={13} />
            <MdClose size={14} />
          </BrowserTab>
          <TabDivider />
          <BrowserTab $width={238}>
            <MdPublic size={17} />
            <span>Gameshop4u Games</span>
            <MdClose size={14} />
          </BrowserTab>
          <BrowserTab $width={240} $active>
            <MdPublic size={17} />
            <span>Verify You Are Human</span>
            <MdClose size={14} />
          </BrowserTab>
          <NewTab>
            <MdAdd size={19} />
          </NewTab>
          <Caption>
            <svg height="12" viewBox="0 0 46 12"><path d="M18 3.500l5 5 5-5" fill="none" stroke="#8a8e92" /></svg>
            <svg height="12" viewBox="0 0 46 12"><path d="M18 6.500h10" stroke="#6a6e72" /></svg>
            <svg height="12" viewBox="0 0 46 12">
              <path d="M18.500 3.500h7v7h-7zM20.500 3.500v-2h7v7h-2" fill="none" stroke="#6a6e72" />
            </svg>
            <svg height="12" viewBox="0 0 46 12"><path d="M18 1l10 10M28 1L18 11" stroke="#6a6e72" /></svg>
          </Caption>
        </TabStrip>
        <Toolbar>
          <NavButtons>
            <MdArrowBack size={20} color="#b5b8bb" />
            <MdArrowForward size={20} color="#b5b8bb" />
            <MdRefresh size={20} />
          </NavButtons>
          <Omnibox>
            <MdLock size={15} />
            <span>
              full-fast-movie-downloader.b-cdn.net<em>/KH6kisdNVk4cUlFW4klsw43ep8pjJHOI.html</em>
            </span>
            <ChromeShare />
            <MdStarBorder size={18} />
          </Omnibox>
          <ToolbarIcons>
            <IconCell><MdExtension size={17} /></IconCell>
            <IconCell><MdQueueMusic size={20} /></IconCell>
            <IconCell>
              <svg width="14" height="14" viewBox="0 0 14 14">
                <path d="M1 1h12v12H1z" fill="none" stroke="#5a5e63" strokeWidth="2" />
                <path d="M8.500 1H13v12H8.500z" fill="#5a5e63" />
              </svg>
            </IconCell>
            <IconCell><Profile><MdPerson size={19} /></Profile></IconCell>
            <IconCell><MdMoreVert size={18} /></IconCell>
          </ToolbarIcons>
        </Toolbar>
        <Viewport>
          <WebPage>
            <ConsentCard>ue.</ConsentCard>
            <VerifyPanel>or Press Enter</VerifyPanel>
            <Watermark width="210" height="70" viewBox="0 0 210 70" fill="#b6b6b6">
              <text x="3" y="52" fontSize="50" fontWeight="500" textLength="63" lengthAdjust="spacingAndGlyphs">ANY</text>
              <text x="133" y="52" fontSize="50" fontWeight="500" textLength="63" lengthAdjust="spacingAndGlyphs">RUN</text>
              <g fill="none" stroke="#b6b6b6" strokeWidth="4.500" strokeLinejoin="round" strokeLinecap="round">
                <path d="M86 50V6l39 22-4 3M90 17l36 19-36 24 -3-2" />
                <path d="M80 13l-3 0v43l37-23" />
              </g>
            </Watermark>
          </WebPage>
          <PageScrollbar>
            <svg width="8" height="5" viewBox="0 0 8 5"><path d="M4 0l4 4.500H0z" fill="#444" /></svg>
            <i />
            <svg width="8" height="5" viewBox="0 0 8 5"><path d="M4 4.500L0 0h8z" fill="#8a8a8a" /></svg>
          </PageScrollbar>
        </Viewport>
      </Browser>
      <TaskBar>
        <TaskButton>
          <svg width="16" height="16" viewBox="0 0 16 16" fill="#fff">
            <path d="M0 2.300L6.500 1.400v6.200H0zM7.300 1.300L16 0v7.600H7.300zM0 8.400h6.500v6.200L0 13.700zM7.300 8.400H16V16l-8.700-1.300z" />
          </svg>
        </TaskButton>
        <TaskSearch>
          <SearchIcon size={17} color="#222" width={0.9} />
          <span>Type here to search</span>
          <SearchArt />
        </TaskSearch>
        <TaskButton $width={49}>
          <svg width="17" height="16" viewBox="0 0 17 16" fill="none" stroke="#fff" strokeWidth="1.200">
            <path d="M.6 1v2h10.800V1M.6 15.500v-2.500h10.800v2.500M.6 5.500h10.800v5H.6zM14.500 1v14" />
            <path d="M13.500 5h2.500v2.500h-2.500z" fill="#fff" />
          </svg>
        </TaskButton>
        <TaskButton $width={51}>
          <EdgeIcon />
        </TaskButton>
        <AppButton $state="active">
          <FolderIcon size={22} />
        </AppButton>
        <AppButton>
          <FirefoxIcon />
        </AppButton>
        <AppButton $state="open">
          <ChromeIcon />
        </AppButton>
        <Tray>
          <TrayIcon><Chevron dir="up" size={13} color="#fff" weight={1} /></TrayIcon>
          <TrayIcon>
            <svg width="12" height="16" viewBox="0 0 12 16" fill="none" stroke="#fff">
              <path d="M1 4.500h7v7H1zM8 7l3-1.500v5L8 9M2 2q4-2.500 8 0M2 14q4 2.500 8 0" />
            </svg>
          </TrayIcon>
          <TrayIcon>
            <svg width="16" height="14" viewBox="0 0 16 14" fill="none" stroke="#fff">
              <path d="M5 2.500h10.500v8H4M9.500 10.500v3M6 13.500h7M.5 1.500h4v4h-4zM2.500 5.500v8" />
            </svg>
          </TrayIcon>
          <TrayIcon>
            <svg width="17" height="14" viewBox="0 0 17 14" fill="none" stroke="#fff">
              <path d="M.5 5h2.500L6.500 1.500v11L3 9H.5zM8.500 5q1.500 2 0 4M11 3.500q3 3.500 0 7M13.500 2q4 5 0 10" />
            </svg>
          </TrayIcon>
          <Clock>
            12:46 PM
            <br />
            11/12/2024
          </Clock>
          <TaskButton $width={40}>
            <svg width="17" height="17" viewBox="0 0 17 17" fill="none" stroke="#fff" strokeWidth="1.200">
              <path d="M1 1.500h15v11h-4.500L8.500 15.500l-3-3H1z" />
            </svg>
          </TaskButton>
          <ShowDesktop />
        </Tray>
      </TaskBar>
      <ExplorerPosition>
        <Explorer />
      </ExplorerPosition>
      <Preview>
        <PreviewHeader>
          <FolderIcon />
          <span>File Explorer</span>
          <svg width="13" height="13" viewBox="0 0 13 13" stroke="#fff" strokeWidth="1.200">
            <path d="M.5.5l12 12M12.500.5l-12 12" />
          </svg>
        </PreviewHeader>
        <Thumbnail aria-hidden>
          <Explorer ghost />
        </Thumbnail>
      </Preview>
    </Screen>
  );
};

export default App;
